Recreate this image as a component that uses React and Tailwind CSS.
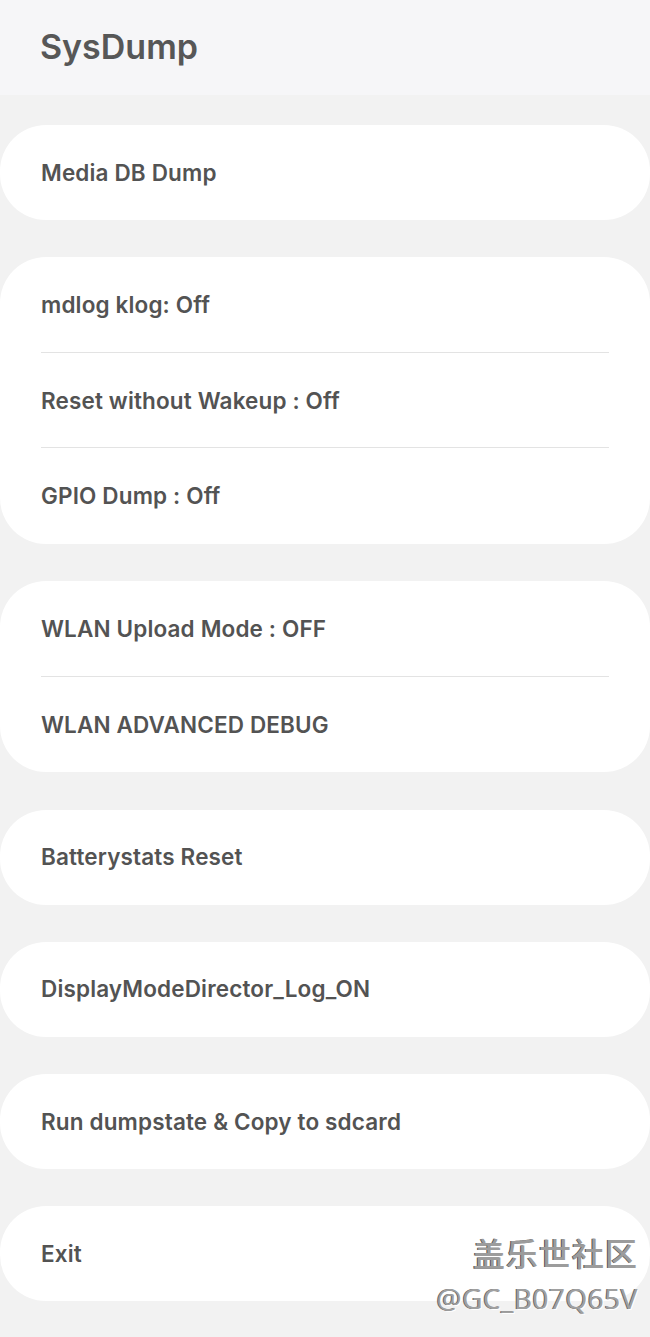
import React from "react";

const font = { fontFamily: 'Inter, "Open Sans", sans-serif' };

function Row({ label, divider, h }) {
  return (
    <div className={`relative flex items-center px-[41px] ${h}`}>
      <span className="text-[22.5px] font-[560] text-[#535353] tracking-[0.15px]">{label}</span>
      {divider && <div className="absolute left-[41px] right-[41px] bottom-0 h-px bg-[#e3e3e3]" />}
    </div>
  );
}

function Card({ items }) {
  const h = items.length > 1 ? "h-[95.6px]" : "h-[95px]";
  return (
    <div className="bg-white rounded-[46px] overflow-hidden">
      {items.map((it, i) => (
        <Row key={i} label={it} h={h} divider={i < items.length - 1} />
      ))}
    </div>
  );
}

export default function App() {
  const groups = [
    ["Media DB Dump"],
    ["mdlog klog: Off", "Reset without Wakeup : Off", "GPIO Dump : Off"],
    ["WLAN Upload Mode : OFF", "WLAN ADVANCED DEBUG"],
    ["Batterystats Reset"],
    ["DisplayModeDirector_Log_ON"],
    ["Run dumpstate & Copy to sdcard"],
    ["Exit"],
  ];
  return (
    <div className="relative w-[650px] h-[1337px] bg-[#f2f2f2] overflow-hidden" style={font}>
      <div className="h-[95px] bg-[#f6f6f8] flex items-center px-[40px]">
        <h1 className="text-[34px] font-semibold text-[#575757] leading-none pb-[2px]">SysDump</h1>
      </div>
      <div className="flex flex-col gap-[37.2px] pt-[30px]">
        {groups.map((g, i) => (
          <Card key={i} items={g} />
        ))}
      </div>
      <div className="absolute right-[12px] top-[1236px] flex flex-col items-end">
        <span
          className="text-[32px] font-medium text-[#9c9c9c] leading-none tracking-[1px]"
          style={{ fontFamily: '"Noto Sans CJK SC", sans-serif', textShadow: "-1px 0 0 #555555, 1px 1px 0 #ffffff" }}
        >
          盖乐世社区
        </span>
        <span
          className="text-[28px] text-[#a0a0a0] leading-none mt-[16px] tracking-[0.5px]"
          style={{ fontFamily: '"Open Sans", sans-serif', textShadow: "-1px 0 0 #666666, 1px 1px 0 #ffffff" }}
        >
          @GC_B07Q65V
        </span>
      </div>
    </div>
  );
}
